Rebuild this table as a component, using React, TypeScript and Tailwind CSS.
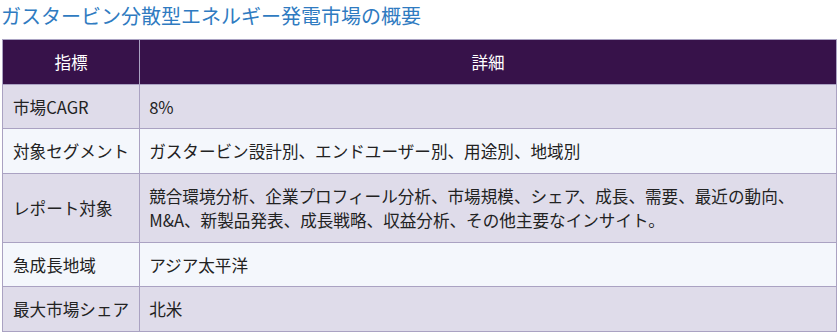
const rows = [
  { label: "市場CAGR", value: "8%" },
  { label: "対象セグメント", value: "ガスタービン設計別、エンドユーザー別、用途別、地域別" },
  {
    label: "レポート対象",
    value:
      "競合環境分析、企業プロフィール分析、市場規模、シェア、成長、需要、最近の動向、M&A、新製品発表、成長戦略、収益分析、その他主要なインサイト。",
  },
  { label: "急成長地域", value: "アジア太平洋" },
  { label: "最大市場シェア", value: "北米" },
];

export default function App() {
  return (
    <main className="min-h-screen bg-white font-['Noto_Sans_CJK_JP','Noto_Sans',sans-serif] text-[#222]">
      <h2 className="pl-[1px] pt-[2px] text-[20px] leading-[28px] text-[#2f7bc1]">
        ガスタービン分散型エネルギー発電市場の概要
      </h2>

      <table className="ml-[2px] mt-[9px] w-[835px] border-collapse border border-[#aaa2c2] text-[16.6px] leading-[24px]">
        <thead>
          <tr className="bg-[#37124a] text-white">
            <th className="w-[137px] border border-[#aaa2c2] px-[10px] pt-[10px] pb-[9.7px] font-normal">指標</th>
            <th className="border border-[#aaa2c2] px-[10px] pt-[10px] pb-[9.7px] font-normal">詳細</th>
          </tr>
        </thead>
        <tbody>
          {rows.map((row, i) => (
            <tr key={row.label} className={i % 2 === 0 ? "bg-[#dfdcea]" : "bg-[#f4f7fc]"}>
              <td className="whitespace-nowrap border border-[#aaa2c2] px-[10px] pt-[10px] pb-[9.7px]">{row.label}</td>
              <td className="border border-[#aaa2c2] px-[9px] pt-[10px] pb-[9.7px] pr-[30px]">{row.value}</td>
            </tr>
          ))}
        </tbody>
      </table>
    </main>
  );
}
